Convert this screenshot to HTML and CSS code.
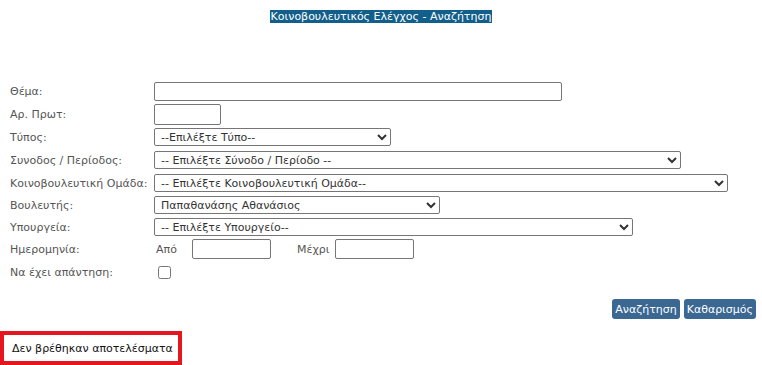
FILE: index.html
```html
<!DOCTYPE html>
<html lang="el">
<head>
<meta charset="utf-8">
<title>Κοινοβουλευτικός Ελέγχος - Αναζήτηση</title>
<link rel="stylesheet" href="styles.css">
</head>
<body>
<div class="page">
  <h1 class="title"><span class="title-text">Κοινοβουλευτικός Ελέγχος - Αναζήτηση</span></h1>
  <form class="search-form">
    <label class="lbl">Θέμα:</label>
    <div class="ctl"><input type="text" class="inp inp-theme"></div>

    <label class="lbl">Αρ. Πρωτ:</label>
    <div class="ctl"><input type="text" class="inp inp-prot"></div>

    <label class="lbl">Τύπος:</label>
    <div class="ctl"><select class="sel sel-type"><option>--Επιλέξτε Τύπο--</option></select></div>

    <label class="lbl">Συνοδος / Περίοδος:</label>
    <div class="ctl"><select class="sel sel-period"><option>-- Επιλέξτε Σύνοδο / Περίοδο --</option></select></div>

    <label class="lbl">Κοινοβουλευτική Ομάδα:</label>
    <div class="ctl"><select class="sel sel-group"><option>-- Επιλέξτε Κοινοβουλευτική Ομάδα--</option></select></div>

    <label class="lbl">Βουλευτής:</label>
    <div class="ctl"><select class="sel sel-mp"><option>Παπαθανάσης Αθανάσιος</option></select></div>

    <label class="lbl">Υπουργεία:</label>
    <div class="ctl"><select class="sel sel-min"><option>-- Επιλέξτε Υπουργείο--</option></select></div>

    <label class="lbl">Ημερομηνία:</label>
    <div class="ctl dates">
      <span class="date-lbl from">Από</span><input type="text" class="inp inp-date">
      <span class="date-lbl to">Μέχρι</span><input type="text" class="inp inp-date">
    </div>

    <label class="lbl">Να έχει απάντηση:</label>
    <div class="ctl"><input type="checkbox" class="chk"></div>
  </form>
  <div class="actions">
    <button type="button" class="btn">Αναζήτηση</button>
    <button type="button" class="btn">Καθαρισμός</button>
  </div>
  <div class="result">Δεν βρέθηκαν αποτελέσματα</div>
</div>
</body>
</html>
```
FILE: styles.css
```css
html, body {
  margin: 0;
  padding: 0;
  background: #fff;
}
body {
  font-family: "DejaVu Sans", Verdana, sans-serif;
  font-size: 11px;
  color: #555;
  overflow: hidden;
}
.page {
  width: 762px;
  height: 365px;
  display: flex;
  flex-direction: column;
}
.title {
  margin: 9px 0 0;
  text-align: center;
  font-size: 11px;
  font-weight: normal;
  line-height: 16px;
}
.title-text {
  background: #135f8c;
  color: #fff;
  padding: 0 1px;
}
.search-form {
  margin-top: 55px;
  display: grid;
  grid-template-columns: 144px 1fr;
  grid-template-rows: 22px 24px 22px 24px 22px 22px 22px 22px 24px;
  padding-left: 10px;
  align-items: center;
}
.lbl {
  color: #555;
  white-space: nowrap;
}
.ctl {
  display: flex;
  align-items: center;
}
.inp {
  box-sizing: border-box;
  border: 1px solid #767676;
  border-radius: 2px;
  background: #fff;
  margin: 0;
  padding: 1px 3px;
  font: inherit;
  height: 19px;
}
.inp-theme { width: 408px; }
.inp-prot { width: 67px; height: 21px; }
.inp-date { width: 79px; height: 20px; }
.sel {
  box-sizing: border-box;
  height: 18px;
  border: 1px solid #767676;
  border-radius: 2px;
  background: #fff;
  color: #333;
  font: inherit;
  font-size: 11px;
  margin: 0;
  padding: 0 2px;
}
.sel-type { width: 237px; }
.sel-period { width: 527px; }
.sel-group { width: 574px; }
.sel-mp { width: 286px; }
.sel-min { width: 479px; }
.dates .date-lbl { color: #555; }
.dates .from { margin-left: 2px; width: 36px; }
.dates .to { margin-left: 26px; width: 38px; }
.chk {
  margin: 0 0 0 4px;
  width: 13px;
  height: 13px;
}
.actions {
  margin-top: 15px;
  display: flex;
  justify-content: flex-end;
  gap: 4px;
  padding-right: 6px;
}
.btn {
  background: #3b6793;
  color: #fff;
  border: none;
  border-radius: 3px;
  font-family: inherit;
  font-size: 11px;
  height: 20px;
  padding: 0 3px;
  margin: 0;
}
.result {
  margin-top: 12px;
  width: 182px;
  box-sizing: border-box;
  border: 4px solid #e5161f;
  height: 35px;
  padding: 0 0 0 8px;
  display: flex;
  align-items: center;
  color: #111;
}
```
